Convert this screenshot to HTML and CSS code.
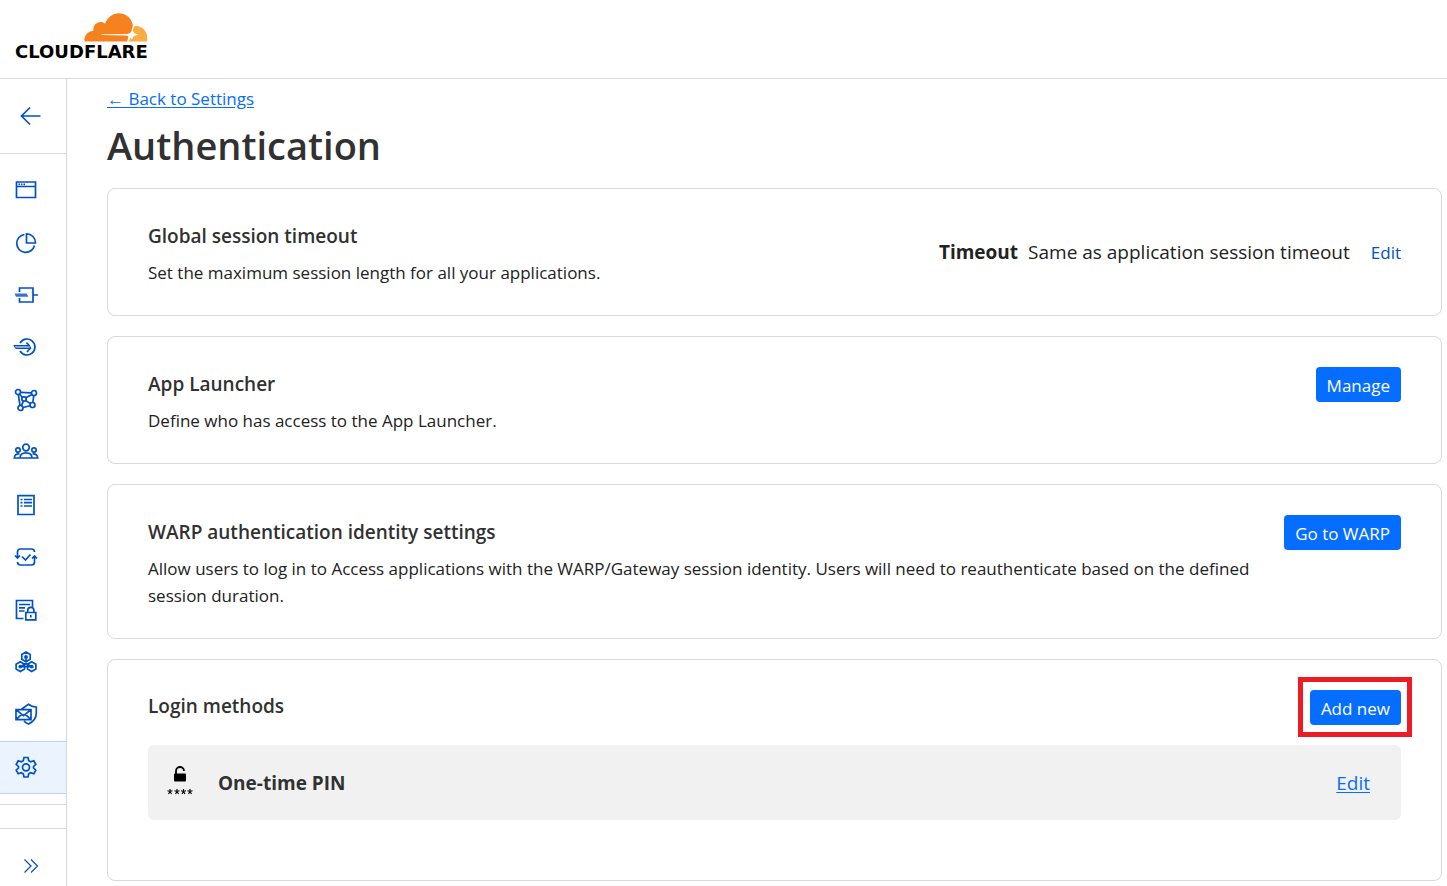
FILE: index.html
```html
<!DOCTYPE html>
<html lang="en">
<head>
<meta charset="utf-8">
<meta name="viewport" content="width=device-width, initial-scale=1">
<title>Authentication</title>
<link rel="stylesheet" href="styles.css">
</head>
<body>
<header class="topbar">
  <a class="logo" href="#" aria-label="Cloudflare">
    <svg class="logo-cloud" width="64" height="30" viewBox="0 0 64 30" aria-hidden="true">
      <path fill="#f6821f" d="M0.500 28.500C-.3 22.500 4 18.200 9.500 17.800C8.600 12.500 12.500 9 16.500 9C18.300 9 19.800 9.700 21 10.700C23.200 4.500 28.500.2 34.700.2C42 .2 47.500 5 48.800 11.800C49 13.500 48 16 47.500 18C46.700 20.200 45 20.800 42.500 20.900L17.500 21.300V22L42 22.400C44.800 22.500 44.500 24 44 25.600L43 28.500Z"/>
      <path fill="#fbad41" d="M50.500 13C57.700 12.300 63.600 18 63.300 25.500C63.300 26.700 63.200 27.600 62.900 28.500H44.700L46.300 24.800L48 26.500L49.500 23.300L54.500 21.700L50 20L48.600 17.200Z"/>
    </svg>
    <span class="logo-word">CLOUDFLARE</span>
  </a>
</header>
<div class="shell">
  <aside class="sidebar">
    <a class="back" href="#" aria-label="Back">
      <svg width="22" height="20" viewBox="0 0 22 20"><path d="M20.500 10H2M10 1.500L1.500 10L10 18.500"/></svg>
    </a>
    <nav class="nav" aria-label="Main">
      <a href="#" aria-label="Home"><svg width="26" height="24" viewBox="0 0 26 24"><path d="M3.500 4h19v15.500h-19zM3.500 8.500h19"/><path d="M5.500 6.300h6.500" stroke-dasharray="1.500 1"/></svg></a>
      <a href="#" aria-label="Analytics"><svg width="26" height="24" viewBox="0 0 26 24"><path d="M11.500 3.500A9 9 0 1 0 21.500 14.500M13.500 2.800V12H22.500A9 9 0 0 0 13.500 2.800Z"/></svg></a>
      <a href="#" aria-label="Gateway"><svg width="26" height="24" viewBox="0 0 26 24"><path d="M6.500 9V5h13.500v14H6.500v-4M20 12h5"/><path d="M1.500 10.500H13.500L15.500 13.800H3Z" fill="#0051c3" stroke="none" opacity=".8"/></svg></a>
      <a href="#" aria-label="Access"><svg width="26" height="24" viewBox="0 0 26 24"><path d="M7 8A8 8 0 1 1 7 16M13.500 7.500L16.500 11M17 13.500L14 17"/><path d="M.8 10.500H16.500L18 13.500H2.800Z" fill="#0051c3" fill-opacity=".5" stroke-width="1"/></svg></a>
      <a href="#" aria-label="Networks"><svg width="26" height="24" viewBox="0 0 26 24"><circle cx="5" cy="4" r="2.500"/><circle cx="21" cy="5" r="2.500"/><circle cx="7.500" cy="20" r="2.500"/><circle cx="19.500" cy="17" r="2.500"/><circle cx="11" cy="11" r="2.200"/><path d="M7.500 4.300L18.500 4.800M5.300 6.500L7 17.500M10 19.500L17 17.700M20.800 7.500L19.800 14.500M6.500 6L9.500 9.500M12.700 9.800L19 6.500M12.500 12.500L17.500 15.600M10.500 13.200L8.300 17.700"/></svg></a>
      <a href="#" aria-label="Team"><svg width="26" height="24" viewBox="0 0 26 24"><circle cx="13" cy="7.500" r="3.300"/><circle cx="5" cy="10" r="2.200"/><circle cx="21" cy="10" r="2.200"/><path d="M7 18C7 14.500 9.500 12.800 13 12.800S19 14.500 19 18ZM6.500 14C3.500 13.700 1.300 15 1.300 18H7M19.500 14C22.500 13.700 24.700 15 24.700 18H19"/></svg></a>
      <a href="#" aria-label="Logs"><svg width="26" height="24" viewBox="0 0 26 24"><path d="M5 2.700h16v18.800H5zM7.500 6.500h2M11 6.500h8M7.500 9.700h2M11 9.700h8M7.500 13h2M11 13h8"/></svg></a>
      <a href="#" aria-label="Posture"><svg width="26" height="24" viewBox="0 0 26 24"><path d="M4.500 13V7q0-3 3-3h11q3 0 3 3M21.500 11v6q0 3-3 3h-11q-3 0-3-3M2 10.500l2.500 2.500L7 10.500M19 13.500l2.500-2.500 2.500 2.500M9 11.500l3.500 3.500L17.500 9.500"/></svg></a>
      <a href="#" aria-label="Data loss prevention"><svg width="26" height="24" viewBox="0 0 26 24"><path d="M10.500 20.500h-7V2.500h16V9M6 6.500h11M6 9.800h6M6 13h5.500M12.800 14.500h10v7.300h-10zM14.700 14.500v-2a3.100 3.100 0 0 1 6.200 0v2M17.800 17v2.500"/></svg></a>
      <a href="#" aria-label="Integrations"><svg width="26" height="24" viewBox="0 0 26 24"><path d="M13 2l4.200 2.400v4.900L13 11.700 8.800 9.300V4.400ZM7.300 11.800l4.200 2.400v4.900l-4.200 2.400-4.200-2.400v-4.900ZM18.700 11.800l4.200 2.400v4.900l-4.200 2.400-4.200-2.400v-4.900ZM13 8v3.500M7.300 16.600l5.700-2.800 5.700 2.800M7.300 16.600h11.400"/><circle cx="13" cy="7" r="1.100"/><circle cx="7.300" cy="16.600" r="1.100"/><circle cx="18.700" cy="16.600" r="1.100"/></svg></a>
      <a href="#" aria-label="Email security"><svg width="26" height="24" viewBox="0 0 26 24"><path d="M3 7.700h15v10H3zM3 7.700l7.500 6 7.500-6M3 17.700l5.500-5.300M18 17.700l-5.500-5.300M8.500 7C11 5.500 13 4 15.500 2.300C18 4.200 20.500 5 23.300 5.200V11C23.300 16.500 20.300 19.800 15.500 22C13.500 21.200 12 20.300 11 19"/></svg></a>
      <a href="#" class="active" aria-current="page" aria-label="Settings"><svg width="26" height="24" viewBox="0 0 26 24"><path d="M11 2.500h4l.7 3.200 2 1.100 3.100-1 2 3.500-2.300 2.200v1.500l2.300 2.200-2 3.500-3.100-1-2 1.100-.7 3.200h-4l-.7-3.200-2-1.100-3.100 1-2-3.500L5.500 13v-1.500L3.200 9.300l2-3.500 3.100 1 2-1.100Z"/><circle cx="13" cy="12.300" r="3.500"/></svg></a>
    </nav>
    <div class="spacer"></div>
    <button class="expand" type="button" aria-label="Expand sidebar">
      <svg width="16" height="16" viewBox="0 0 16 16"><path d="M1.500 1.500L8 8l-6.500 6.500M8 1.500L14.500 8 8 14.500"/></svg>
    </button>
  </aside>
  <main class="content">
    <a class="link crumb" href="#">← Back to Settings</a>
    <h1>Authentication</h1>
    <div class="cards">
      <section class="card middle">
        <div class="copy">
          <h2>Global session timeout</h2>
          <p>Set the maximum session length for all your applications.</p>
        </div>
        <div class="setting">
          <strong>Timeout</strong>
          <span>Same as application session timeout</span>
          <a class="edit" href="#">Edit</a>
        </div>
      </section>
      <section class="card">
        <div class="copy">
          <h2>App Launcher</h2>
          <p>Define who has access to the App Launcher.</p>
        </div>
        <button class="btn" type="button">Manage</button>
      </section>
      <section class="card">
        <div class="copy">
          <h2>WARP authentication identity settings</h2>
          <p>Allow users to log in to Access applications with the WARP/Gateway session identity. Users will need to reauthenticate based on the defined session duration.</p>
        </div>
        <button class="btn" type="button">Go to WARP</button>
      </section>
      <section class="card login">
        <div class="login-head">
          <h2>Login methods</h2>
          <div class="highlight"><button class="btn" type="button">Add new</button></div>
        </div>
        <div class="method">
          <svg width="28" height="38" viewBox="0 0 28 38" aria-hidden="true">
            <rect x="8" y="8.500" width="12" height="8" rx="1"/>
            <path d="M10 9V6a4 4 0 0 1 8 0" fill="none" stroke="#000" stroke-width="1.800"/>
            <path d="M4 24v2.500M1.500 25.700l2.500.8 2.500-.8M2.500 29l1.500-2.500L5.500 29M11 24v2.500M8.500 25.700l2.500.8 2.500-.8M9.500 29l1.500-2.500 1.500 2.500M17.500 24v2.500M15 25.700l2.500.8 2.500-.8M16 29l1.500-2.500L19 29M24 24v2.500M21.500 25.700l2.500.8 2.500-.8M22.500 29l1.500-2.500 1.500 2.500" fill="none" stroke="#000" stroke-width="1.100"/>
          </svg>
          <h3>One-time PIN</h3>
          <a class="link" href="#">Edit</a>
        </div>
      </section>
    </div>
  </main>
</div>
</body>
</html>
```
FILE: styles.css
```css
* {
  box-sizing: border-box;
}

body {
  margin: 0;
  min-height: 100vh;
  display: flex;
  flex-direction: column;
  background: #fff;
  color: #222;
  font-family: "Open Sans", "Noto Sans", sans-serif;
  font-size: 17px;
  line-height: 27px;
}

h1, h2, h3, p {
  margin: 0;
  font-weight: 600;
  color: #313131;
}

.topbar {
  padding: 13px 15px 17px;
  border-bottom: 1px solid #d9d9d9;
}

.logo {
  display: inline-flex;
  flex-direction: column;
  align-items: flex-end;
  color: #000;
  text-decoration: none;
}

.logo-cloud {
  display: block;
}

.logo-word {
  font: bold 18px/18px "DejaVu Sans", sans-serif;
}

.shell {
  flex: 1;
  display: flex;
}

.sidebar {
  flex: none;
  width: 67px;
  display: flex;
  flex-direction: column;
  border-right: 1px solid #d9d9d9;
}

.sidebar svg {
  display: block;
  fill: none;
  stroke: #0051c3;
  stroke-width: 1.7;
}

.back {
  height: 75px;
  padding: 27px 20px;
  border-bottom: 1px solid #d9d9d9;
}

.nav {
  flex: 1;
  display: flex;
  flex-direction: column;
  padding: 10px 0;
}

.nav a {
  flex: 1 0 40px;
  display: flex;
  align-items: center;
  padding-left: 13px;
}

.nav .active {
  flex-basis: 41px;
  background: #ebf3ff;
  border-top: 1px solid #b6d2ff;
  border-bottom: 1px solid #b6d2ff;
}

.spacer {
  height: 25px;
  border: solid #d9d9d9;
  border-width: 1px 0;
}

.expand {
  height: 57px;
  padding: 16px 0 0 23px;
  border: 0;
  background: none;
}

.sidebar .expand svg {
  stroke-width: 1.2;
}

.content {
  flex: 1;
  min-width: 0;
  padding: 6px 5px 5px 40px;
}

.link {
  color: #056dff;
  text-underline-offset: 2px;
}

.crumb {
  display: block;
  width: fit-content;
}

h1 {
  padding: 6px 0 16px;
  font-size: 38px;
  line-height: 54px;
}

h2 {
  font-size: 19px;
  line-height: 28px;
}

.cards {
  display: flex;
  flex-direction: column;
  gap: 20px;
}

.card {
  display: flex;
  justify-content: space-between;
  align-items: flex-start;
  gap: 24px;
  padding: 30px 40px 29px;
  border: 1px solid #d9d9d9;
  border-radius: 8px;
}

.middle {
  align-items: center;
}

.copy {
  padding-top: 3px;
}

.copy p {
  margin-top: 9px;
  font-weight: 400;
  color: #222;
}

.setting {
  display: flex;
  align-items: center;
  gap: 10px;
  font-size: 19px;
}

.edit {
  margin-left: 11px;
  font-size: 17px;
  color: #0051c3;
  text-decoration: none;
}

.btn {
  flex: none;
  display: block;
  height: 35px;
  padding: 2px 11px 0;
  border: 0;
  border-radius: 4px;
  background: #056dff;
  color: #fff;
  font: inherit;
  white-space: nowrap;
}

.login {
  flex-direction: column;
  align-items: stretch;
  gap: 20px;
  padding-bottom: 60px;
}

.login-head {
  display: flex;
  justify-content: space-between;
}

.login-head h2 {
  padding-top: 2px;
}

.highlight {
  position: relative;
}

.highlight::after {
  content: "";
  position: absolute;
  inset: -13px -11px -12px -12px;
  border: 5px solid #ed1c24;
  pointer-events: none;
}

.method {
  display: flex;
  align-items: center;
  padding: 2px 31px 0 18px;
  min-height: 75px;
  border-radius: 6px;
  background: #f1f1f1;
  font-size: 19px;
}

.method h3 {
  margin: 0 auto 0 24px;
  font-size: 19px;
  font-weight: 700;
}
```
